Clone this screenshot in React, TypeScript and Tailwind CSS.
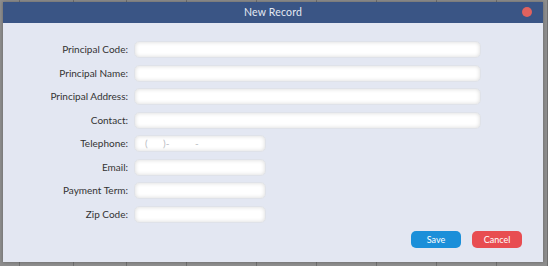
import React from 'react';

const rows: { label: string; wide: boolean; placeholder?: string }[] = [
  { label: 'Principal Code:', wide: true },
  { label: 'Principal Name:', wide: true },
  { label: 'Principal Address:', wide: true },
  { label: 'Contact:', wide: true },
  { label: 'Telephone:', wide: false, placeholder: '(      )-          -' },
  { label: 'Email:', wide: false },
  { label: 'Payment Term:', wide: false },
  { label: 'Zip Code:', wide: false },
];

const cols = [20, 54, 53, 60, 70, 60, 60, 60, 60, 51];

export default function App() {
  return (
    <div
      className="relative w-[548px] h-[266px] overflow-hidden bg-[#8d8d8d]"
      style={{ fontFamily: 'Lato, "Open Sans", sans-serif' }}
    >
      {/* spreadsheet behind */}
      <div className="flex h-full">
        {cols.map((w, i) => (
          <div key={i} className="h-full border-r border-[#6f6f6f]" style={{ width: w }} />
        ))}
      </div>

      {/* dialog */}
      <div className="absolute left-[3px] top-[2px] w-[540px] h-[260px] bg-[#e3e7f2] flex flex-col shadow-[0_0_3px_rgba(0,0,0,0.3)]">
        <div className="relative h-[21px] bg-[#3a5585] flex items-center justify-center">
          <span className="text-[10.5px] text-[#e4e9f3] tracking-[0.2px]">New Record</span>
          <span className="absolute right-[11px] top-[5px] w-[10px] h-[10px] rounded-full bg-[#e0625e]" />
        </div>

        <div className="flex flex-col gap-[6.5px] pt-[18px]">
          {rows.map((r) => (
            <div key={r.label} className="flex items-center h-[17px]">
              <div className="w-[126px] text-right text-[10px] text-[#333] pr-[1px]">{r.label}</div>
              <div
                className={`ml-[5px] h-[17px] rounded-[5px] bg-white border border-[#dfe2e9] shadow-[inset_0_0_4px_rgba(0,0,0,0.16)] flex items-center ${
                  r.wide ? 'w-[347px]' : 'w-[132px]'
                }`}
              >
                {r.placeholder && (
                  <span className="pl-[10px] text-[10px] text-[#b8bbc2] whitespace-pre">{r.placeholder}</span>
                )}
              </div>
            </div>
          ))}
        </div>

        <div className="flex justify-end gap-[11px] pr-[21px] mt-[8px]">
          <button className="w-[50px] h-[17px] rounded-[5px] bg-[#1b8fd9] text-white text-[9px] leading-none">
            Save
          </button>
          <button className="w-[50px] h-[17px] rounded-[5px] bg-[#e84d51] text-white text-[9px] leading-none">
            Cancel
          </button>
        </div>
      </div>
    </div>
  );
}
